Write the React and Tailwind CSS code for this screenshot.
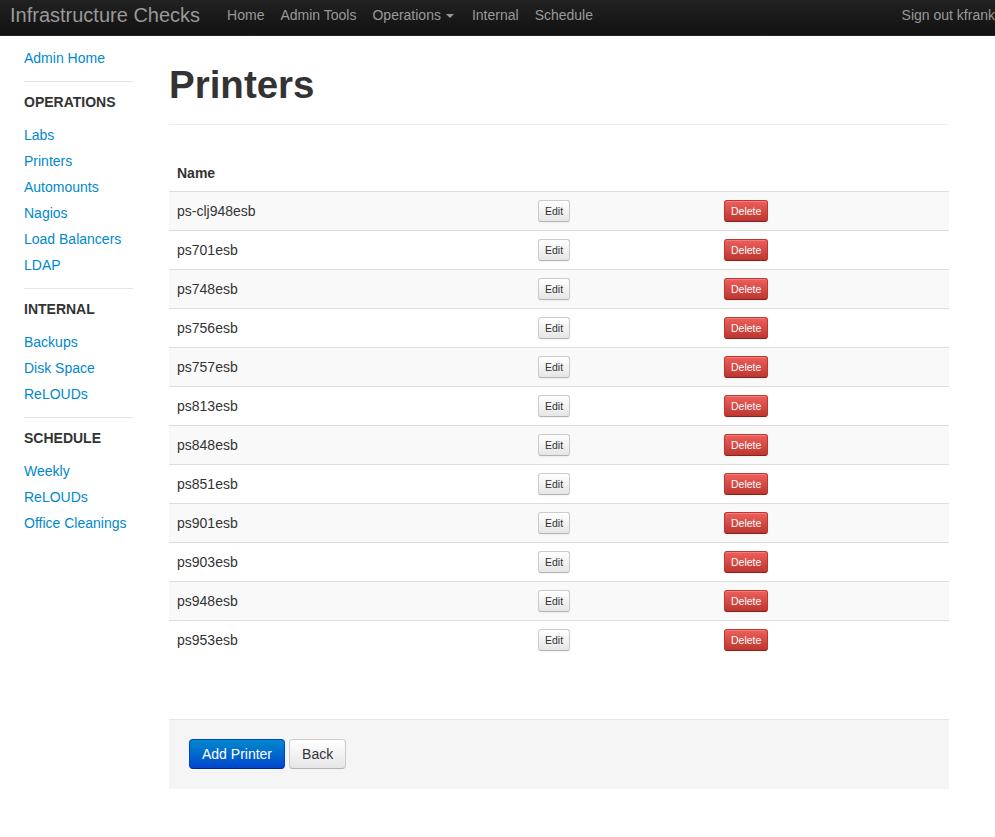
import React from 'react'

const printers = [
  'ps-clj948esb',
  'ps701esb',
  'ps748esb',
  'ps756esb',
  'ps757esb',
  'ps813esb',
  'ps848esb',
  'ps851esb',
  'ps901esb',
  'ps903esb',
  'ps948esb',
  'ps953esb',
]

const sections = [
  { title: 'Operations', links: ['Labs', 'Printers', 'Automounts', 'Nagios', 'Load Balancers', 'LDAP'] },
  { title: 'Internal', links: ['Backups', 'Disk Space', 'ReLOUDs'] },
  { title: 'Schedule', links: ['Weekly', 'ReLOUDs', 'Office Cleanings'] },
]

const Navbar = () => (
  <div className="h-[36px] pb-[6px] flex items-center bg-gradient-to-b from-[#222222] to-[#111111] border-b border-[#252525] text-[#999999]">
    <a className="pl-[10px] text-[20px] leading-[20px] text-[#999999]">Infrastructure Checks</a>
    <ul className="flex items-center ml-[19px] text-[14px] leading-[20px]">
      <li className="px-2">Home</li>
      <li className="px-2">Admin Tools</li>
      <li className="px-2 flex items-center">
        Operations
        <span className="ml-[5px] mt-[2px] w-0 h-0 border-l-4 border-r-4 border-t-4 border-l-transparent border-r-transparent border-t-[#999999]" />
      </li>
      <li className="px-2 ml-[2px]">Internal</li>
      <li className="px-2">Schedule</li>
    </ul>
    <div className="ml-auto text-[14px] leading-[20px] whitespace-nowrap">Sign out kfrank</div>
  </div>
)

const Sidebar = () => (
  <div className="w-[109px] ml-[24px] pt-[9px] flex flex-col gap-[10px] text-[14px]">
    <a className="h-[26px] leading-[26px] text-[#0088cc]">Admin Home</a>
    {sections.map((s) => (
      <div key={s.title} className="flex flex-col gap-[10px]">
        <div className="h-px bg-[#e5e5e5]" />
        <div className="h-[20px] leading-[20px] font-bold uppercase text-[#333333]">{s.title}</div>
        <div className="flex flex-col">
          {s.links.map((l, i) => (
            <a key={i} className="h-[26px] leading-[26px] text-[#0088cc] whitespace-nowrap">{l}</a>
          ))}
        </div>
      </div>
    ))}
  </div>
)

const MiniButton = ({ children, danger }) => (
  <button
    className={
      danger
        ? 'h-[22px] px-[6px] text-[10.5px] leading-[14px] rounded-[3px] border border-[#bd362f] border-b-[#802420] bg-gradient-to-b from-[#ee5f5b] to-[#bd362f] text-white shadow-[inset_0_1px_0_rgba(255,255,255,0.2),0_1px_2px_rgba(0,0,0,0.05)]'
        : 'h-[22px] px-[6px] text-[10.5px] leading-[14px] rounded-[3px] border border-[#cccccc] border-b-[#b3b3b3] bg-gradient-to-b from-white to-[#e6e6e6] text-[#333333] shadow-[inset_0_1px_0_rgba(255,255,255,0.2),0_1px_2px_rgba(0,0,0,0.05)]'
    }
  >
    {children}
  </button>
)

export default function App() {
  return (
    <div className="min-h-screen bg-white font-['Liberation_Sans',Arial,sans-serif] text-[#333333]">
      <Navbar />
      <div className="flex">
        <Sidebar />
        <div className="w-[780px] ml-[36px]">
          {/* Page header */}
          <div className="mt-[29px] mb-[30px] pb-[9px] border-b border-[#eeeeee]">
            <h1 className="mt-0 mb-[10px] text-[38.5px] leading-[40px] font-bold text-[#333333]">Printers</h1>
          </div>

          {/* Printer table */}
          <table className="w-full text-[14px] leading-[20px] border-collapse">
            <thead>
              <tr>
                <th className="w-[361px] text-left font-bold p-[8px] h-[36px]">Name</th>
                <th className="w-[186px] p-[8px]" />
                <th className="p-[8px]" />
              </tr>
            </thead>
            <tbody>
              {printers.map((p, i) => (
                <tr key={p} className={i % 2 === 0 ? 'bg-[#f9f9f9]' : 'bg-white'}>
                  <td className="px-[8px] h-[39px] border-t border-[#dddddd] align-middle">{p}</td>
                  <td className="px-[8px] border-t border-[#dddddd] align-middle">
                    <MiniButton>Edit</MiniButton>
                  </td>
                  <td className="px-[8px] border-t border-[#dddddd] align-middle">
                    <MiniButton danger>Delete</MiniButton>
                  </td>
                </tr>
              ))}
            </tbody>
          </table>

          {/* Form actions */}
          <div className="mt-[59px] pt-[19px] pb-[20px] px-[20px] bg-[#f5f5f5] border-t border-[#e5e5e5] flex gap-[4px]">
            <button className="h-[30px] px-[12px] text-[14px] leading-[20px] rounded-[4px] border border-[#0044cc] border-b-[#002a80] bg-gradient-to-b from-[#0088cc] to-[#0044cc] text-white">
              Add Printer
            </button>
            <button className="h-[30px] px-[12px] text-[14px] leading-[20px] rounded-[4px] border border-[#cccccc] border-b-[#b3b3b3] bg-gradient-to-b from-white to-[#e6e6e6] text-[#333333]">
              Back
            </button>
          </div>
        </div>
      </div>
    </div>
  )
}
